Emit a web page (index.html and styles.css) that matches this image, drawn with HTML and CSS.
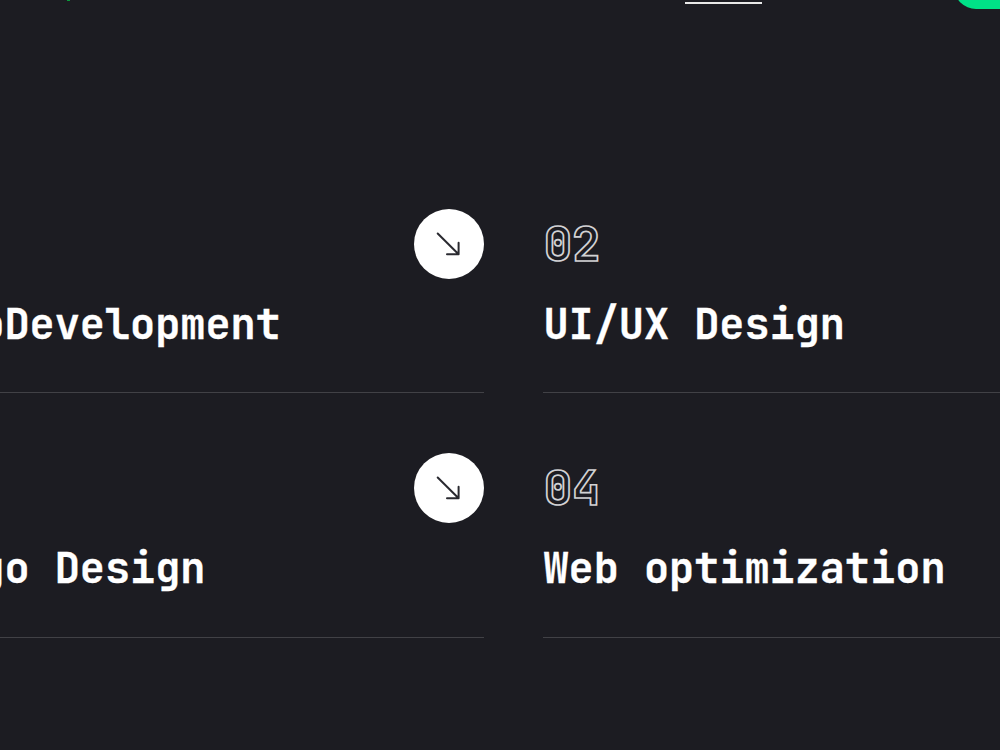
FILE: index.html
```html
<!DOCTYPE html>
<html lang="en">
<head>
    <meta charset="UTF-8">
    <meta name="viewport" content="width=device-width, initial-scale=1.0">
    <title>Services</title>
    <link rel="stylesheet" href="styles.css">
</head>
<body>
    <!-- header -->
    <header class="header">
        <span class="logo-tail"></span>
        <span class="nav-active"></span>
        <span class="hire-button"></span>
    </header>

    <!-- services -->
    <main class="services">
        <section class="service">
            <div class="service-top">
                <a class="service-link" href="#">
                    <svg class="arrow" viewBox="0 0 32 32">
                        <path d="M4.7 5.5 L25.6 26.3 M25.6 14.7 V26.3 H14" />
                    </svg>
                </a>
            </div>
            <h2 class="service-title">WebDevelopment</h2>
        </section>
        <section class="service">
            <div class="service-top">
                <span class="service-num">02</span>
            </div>
            <h2 class="service-title">UI/UX Design</h2>
        </section>
        <section class="service">
            <div class="service-top">
                <a class="service-link" href="#">
                    <svg class="arrow" viewBox="0 0 32 32">
                        <path d="M4.7 5.5 L25.6 26.3 M25.6 14.7 V26.3 H14" />
                    </svg>
                </a>
            </div>
            <h2 class="service-title">Logo Design</h2>
        </section>
        <section class="service">
            <div class="service-top">
                <span class="service-num">04</span>
            </div>
            <h2 class="service-title">Web optimization</h2>
        </section>
    </main>
</body>
</html>
```
FILE: styles.css
```css
* {
    box-sizing: border-box;
}
body {
    margin: 0;
    height: 750px;
    background-color: #1c1c22;
    color: #fff;
    font-family: "JetBrains Mono", "DejaVu Sans Mono", monospace;
    overflow: hidden;
}
.header {
    display: flex;
    align-items: flex-end;
    height: 9px;
    overflow: hidden;
}
.logo-tail {
    flex: none;
    width: 3px;
    height: 1px;
    margin-left: 67px;
    margin-bottom: 8px;
    background-color: #0a9a3c;
}
.nav-active {
    flex: none;
    width: 77px;
    height: 2px;
    margin-left: 615px;
    margin-bottom: 5px;
    background-color: #e8e8e8;
}
.hire-button {
    flex: none;
    width: 130px;
    height: 44px;
    margin-left: 192px;
    border-radius: 22px;
    background-color: #00e187;
}
.services {
    display: grid;
    grid-template-columns: 554.6px 555px;
    column-gap: 59.8px;
    width: 1170px;
    margin-left: -71px;
    padding-top: 199.6px;
}
.service {
    height: 184.5px;
    margin-bottom: 60px;
    border-bottom: 1px solid #414146;
}
.service-top {
    display: flex;
    align-items: center;
    height: 70px;
}
.service-num {
    font-size: 48px;
    line-height: 48px;
    font-weight: bold;
    letter-spacing: -0.4px;
    color: transparent;
    -webkit-text-stroke: 1.7px #d2d2d4;
}
.service-link {
    display: flex;
    justify-content: center;
    align-items: center;
    width: 70px;
    height: 70px;
    margin-left: auto;
    border-radius: 50%;
    background-color: #fff;
}
.arrow {
    width: 32px;
    height: 32px;
    fill: none;
    stroke: #2a2a30;
    stroke-width: 2;
    stroke-linecap: round;
    stroke-linejoin: round;
}
.service-title {
    margin: 24.1px 0 0;
    font-size: 41.9px;
    line-height: 42px;
    font-weight: bold;
    -webkit-text-stroke: 0.3px #fff;
    white-space: nowrap;
}
```
